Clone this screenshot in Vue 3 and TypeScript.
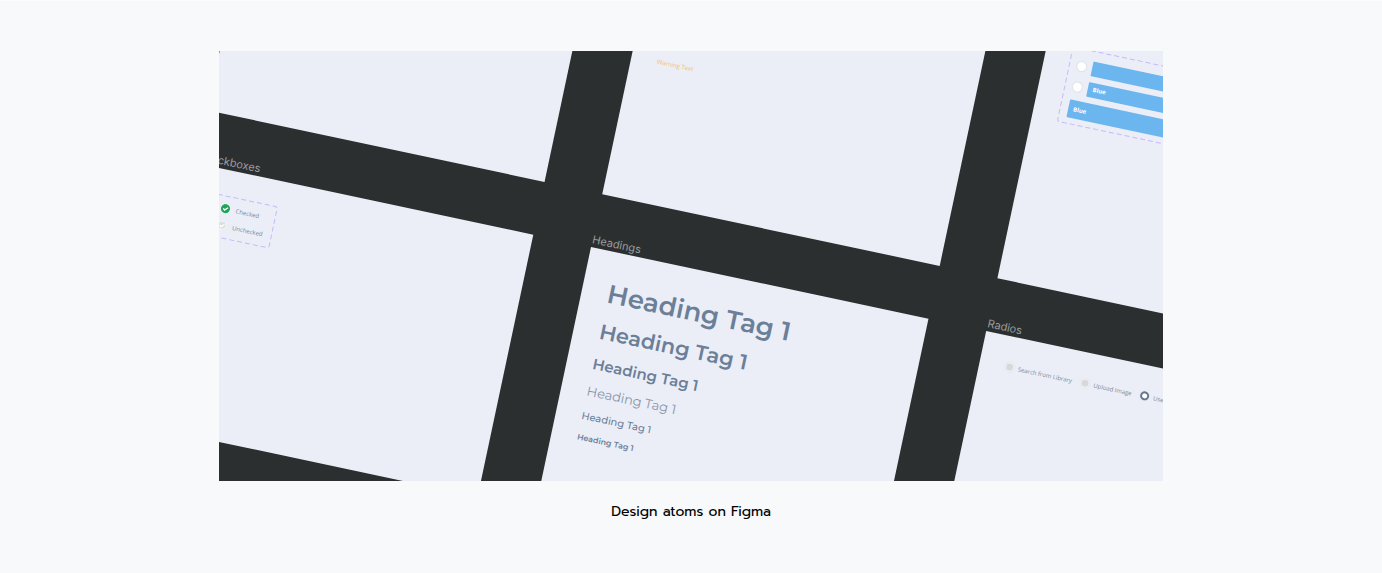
<script setup lang="ts">
import { ref } from 'vue'

const headingLevels = ['h1', 'h2', 'h3', 'h4', 'h5', 'h6']

const checks = ref([
  { id: 'check-on', label: 'Checked', on: true },
  { id: 'check-off', label: 'Unchecked', on: false },
])

const sources = [
  { id: 'library', label: 'Search from Library' },
  { id: 'upload', label: 'Upload Image' },
  { id: 'use', label: 'Use' },
]
const source = ref('use')

const swatches = [
  { id: 'swatch-plain', label: '' },
  { id: 'swatch-blue', label: 'Blue' },
]
const swatch = ref('')
</script>

<template>
  <main class="page">
    <figure class="figure">
      <div class="canvas">
        <div class="board">
          <section class="frame"></section>

          <section class="frame texts">
            <p class="warning">Warning Text</p>
          </section>

          <section class="frame">
            <div class="variants swatches">
              <svg class="outline" aria-hidden="true"><rect width="100%" height="100%" rx="2" /></svg>
              <div v-for="s in swatches" :key="s.id" class="swatch-row">
                <input :id="s.id" v-model="swatch" class="dot" type="radio" name="swatch" :value="s.id" :aria-label="s.label || 'Plain'" />
                <label class="bar" :for="s.id">{{ s.label }}</label>
              </div>
              <button class="bar wide" type="button">Blue</button>
            </div>
          </section>

          <section class="frame">
            <h2 class="frame-name">Checkboxes</h2>
            <div class="variants checks">
              <svg class="outline" aria-hidden="true"><rect width="100%" height="100%" rx="2" /></svg>
              <div v-for="c in checks" :key="c.id" class="option">
                <span class="tick">
                  <input :id="c.id" v-model="c.on" class="check" type="checkbox" />
                  <svg class="mark" viewBox="0 0 10 10" aria-hidden="true">
                    <path d="M2.6 5.1 4.4 6.8 7.5 3.5" />
                  </svg>
                </span>
                <label :for="c.id">{{ c.label }}</label>
              </div>
            </div>
          </section>

          <section class="frame">
            <h2 class="frame-name">Headings</h2>
            <div class="headings">
              <component :is="tag" v-for="tag in headingLevels" :key="tag" class="sample" :class="tag">Heading Tag 1</component>
            </div>
          </section>

          <section class="frame">
            <h2 class="frame-name">Radios</h2>
            <div class="radios">
              <div v-for="s in sources" :key="s.id" class="option">
                <input :id="s.id" v-model="source" class="radio" type="radio" name="source" :value="s.id" />
                <label :for="s.id">{{ s.label }}</label>
              </div>
            </div>
          </section>
        </div>
      </div>
      <figcaption class="caption">Design atoms on Figma</figcaption>
    </figure>
  </main>
</template>

<style>
body {
  margin: 0;
  background: #f7f9fb;
}
</style>

<style scoped>
.page {
  box-sizing: border-box;
  min-height: 100vh;
  padding: 50px 24px;
  border-top: 1px solid #fbfcfd;
  background: #f7f9fb;
}
.figure {
  max-width: 944px;
  margin: 0 auto;
}
.canvas {
  position: relative;
  aspect-ratio: 944 / 430;
  overflow: hidden;
  background: #2b2f30;
}
.board {
  position: absolute;
  left: -32px;
  top: -126px;
  display: grid;
  grid-template-columns: repeat(3, 345px);
  grid-template-rows: repeat(2, 268px);
  gap: 54px 59px;
  transform: rotate(12deg);
  transform-origin: 404px 322px;
  color: #7687a0;
  font-family: "Open Sans", "Noto Sans", sans-serif;
  font-size: 6px;
  line-height: 8px;
}
.frame {
  position: relative;
  box-sizing: border-box;
  padding: 26px;
  background: #ebeef6;
}
.frame-name {
  position: absolute;
  left: 0;
  bottom: 100%;
  margin: 0;
  color: #9b9d9e;
  font: 400 11px/16px Inter, sans-serif;
}
.texts {
  padding-top: 123px;
}
.warning {
  margin: 0;
  color: #f6bf6a;
}
.variants {
  position: relative;
  box-sizing: border-box;
  display: flex;
  flex-direction: column;
}
.outline {
  position: absolute;
  inset: 0;
  width: 100%;
  height: 100%;
  overflow: visible;
  fill: none;
  stroke: #c3bbfa;
  stroke-width: 1;
  stroke-dasharray: 5 3;
  pointer-events: none;
}
.swatches {
  gap: 6px;
  padding: 10px 8px 6px;
}
.swatch-row {
  display: flex;
  align-items: center;
  gap: 6px;
}
.bar {
  flex: 1;
  box-sizing: border-box;
  height: 15px;
  padding: 0 5px;
  border: 0;
  border-radius: 1px;
  background: #6cb6f0;
  color: #fff;
  font: 700 6px/15px "Open Sans", sans-serif;
  text-align: left;
}
.wide {
  flex: none;
  height: 18px;
}
.dot,
.radio,
.check {
  appearance: none;
  box-sizing: border-box;
  flex: none;
  width: 9px;
  height: 9px;
  margin: 0;
  border-radius: 50%;
}
.dot {
  background: #fff;
  box-shadow: 0 0 1px 1px #dfe2e9;
}
.checks {
  width: 63px;
  height: 42px;
  gap: 8px;
  padding: 8px;
}
.option {
  display: flex;
  align-items: center;
  gap: 4px;
  white-space: nowrap;
}
.checks .option {
  gap: 6px;
}
.tick {
  display: grid;
  flex: none;
}
.tick > * {
  grid-area: 1 / 1;
}
.check {
  border: 1px solid #f5f5f5;
  background: #dedede;
}
.check:checked {
  border-color: #20a556;
  background: #20a556;
}
.mark {
  position: relative;
  width: 9px;
  height: 9px;
  fill: none;
  stroke: #fff;
  stroke-width: 1.5;
  pointer-events: none;
}
.radios {
  display: flex;
  gap: 9px;
}
.radio {
  border: 1px solid #f3f3f3;
  background: #d8d8da;
  box-shadow: 0 0 2px #d8dce6;
}
.radio:checked {
  border: 2px solid #66768f;
  background: #fff;
}
.headings {
  display: flex;
  flex-direction: column;
  color: #6b7f99;
  font-family: Montserrat, Inter, sans-serif;
}
.sample {
  margin: 0;
  font-weight: 600;
  white-space: nowrap;
}
.h1 {
  font-size: 26px;
  line-height: 32px;
  margin-bottom: 9px;
}
.h2 {
  font-size: 21px;
  line-height: 28px;
  margin-bottom: 7px;
}
.h3 {
  font-size: 15px;
  line-height: 24px;
  margin-bottom: 4px;
}
.h4 {
  color: #8795ab;
  font-size: 13px;
  font-weight: 400;
  line-height: 22px;
  margin-bottom: 4px;
}
.h5 {
  font-size: 10px;
  font-weight: 500;
  line-height: 22px;
}
.h6 {
  font-size: 8px;
  line-height: 20px;
}
.caption {
  margin-top: 19px;
  color: #000;
  font: 400 14px/24px Prompt, "Noto Sans", sans-serif;
  text-align: center;
}
</style>
